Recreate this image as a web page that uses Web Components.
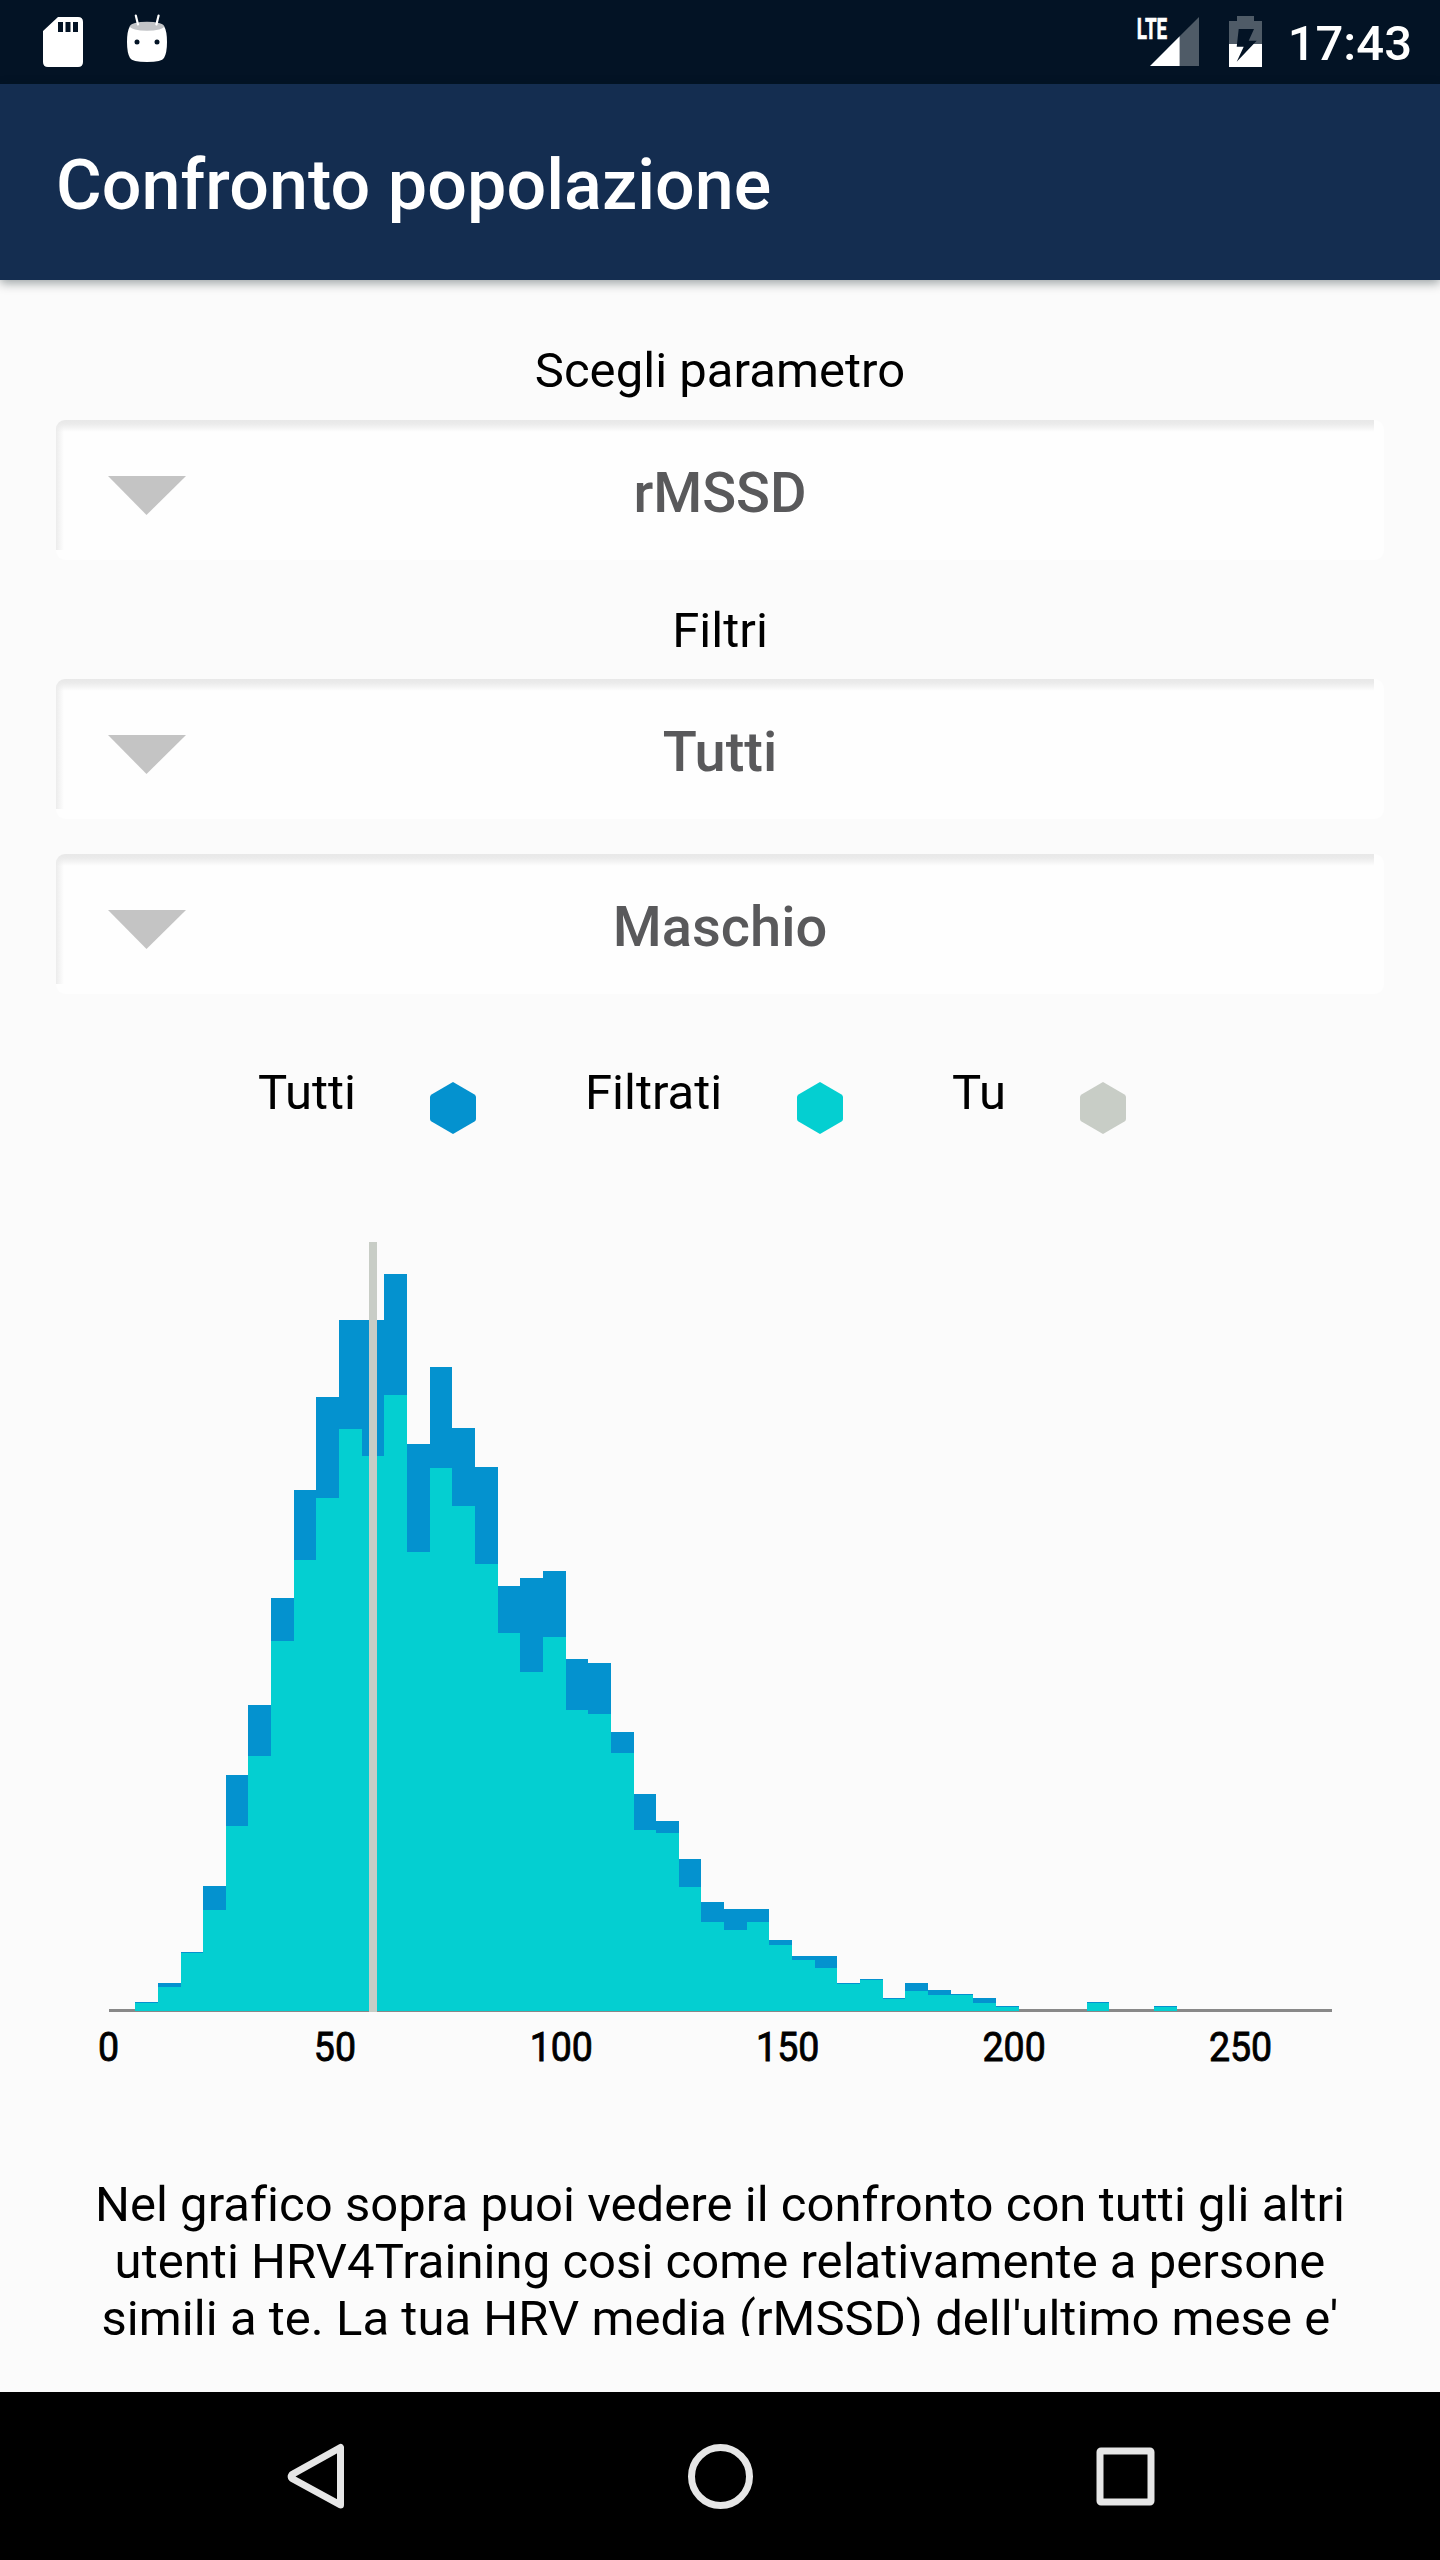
<!DOCTYPE html>
<html lang="it">
<head>
<meta charset="utf-8">
<title>Confronto popolazione</title>
<style>
  body {
    background: #fbfbfb;
    color: #000;
    font-family: Roboto, sans-serif;
    margin: 0;
  }
</style>
</head>
<body>
<population-page></population-page>

<script>
class BaseElement extends HTMLElement {
  constructor() {
    super();
    const template = document.createElement('template');
    template.innerHTML = this.constructor.template;
    this.root = this.attachShadow({ mode: 'open' });
    this.root.appendChild(template.content.cloneNode(true));
  }
}

class StatusBar extends BaseElement {
  static get template() {
    return `
      <style>
        :host {
          align-items: flex-start;
          background: #031325;
          box-sizing: border-box;
          color: #fff;
          display: flex;
          height: 84px;
          padding-right: 28px;
        }

        svg {
          display: block;
          flex: none;
        }

        .spacer {
          flex: 1;
        }

        .time {
          flex: none;
          font-size: 49px;
          font-weight: 500;
          line-height: 57px;
          padding-top: 15px;
          text-align: right;
          width: 132px;
        }
      </style>
      <svg width="200" height="84">
        <path fill="#fff" fill-rule="evenodd" d="M58 17H78Q83 17 83 22V62Q83 67 78 67H48Q43 67 43 62V31ZM58 22V32H63V22ZM65.5 22V32H70.5V22ZM73 22V32H78V22Z"/>
        <path fill="#fff" d="M130 26H164Q167 31 167 42Q167 53 164 58Q162 62 147 62Q132 62 130 58Q127 53 127 42Q127 31 130 26Z"/>
        <ellipse cx="147" cy="26.3" rx="17" ry="4.5" fill="#c2c4c7"/>
        <path d="M135.8 15.5L138 24.5M158.6 15.5L156.4 24.5" stroke="#fff" stroke-width="2.2" stroke-linecap="round"/>
        <circle cx="137" cy="42" r="2.5" fill="#031325"/>
        <circle cx="157" cy="42" r="2.5" fill="#031325"/>
      </svg>
      <div class="spacer"></div>
      <svg width="150" height="84" viewBox="1130 0 150 84">
        <text transform="translate(1136.8 39) scale(0.64 1)" fill="#fff" stroke="#fff" stroke-width="0.6" font-size="29.5" font-weight="700">LTE</text>
        <path fill="#4f5b67" d="M1179.7 36.3L1199 17V66H1179.7Z"/>
        <path fill="#fff" d="M1150 66L1179.7 36.3V66Z"/>
        <path fill="#4f5b67" d="M1237 16H1254V21H1262V44H1229V21H1237Z"/>
        <path fill="#fff" d="M1229 44H1262V67H1229Z"/>
        <path fill="#031325" d="M1238.7 29H1254L1248.7 40.7H1256.7L1236.7 61.7L1243.7 46.7H1236.7Z"/>
      </svg>
      <div class="time">17:43</div>
    `;
  }
}
window.customElements.define('status-bar', StatusBar);

class AppBar extends BaseElement {
  static get template() {
    return `
      <style>
        :host {
          align-items: center;
          background: #142d50;
          box-shadow: 0 3px 10px rgba(0, 20, 25, 0.4);
          box-sizing: border-box;
          color: #fff;
          display: flex;
          font-size: 70px;
          font-weight: 500;
          height: 196px;
          letter-spacing: 0.06px;
          line-height: 82px;
          padding: 6px 56px 0;
        }
      </style>
      <slot></slot>
    `;
  }
}
window.customElements.define('app-bar', AppBar);

class SelectBox extends BaseElement {
  static get template() {
    return `
      <style>
        :host {
          background:
            linear-gradient(#e8e8e8, #ebebeb 4px, rgba(254, 254, 254, 0) 12px) 0 0 / 1318px 12px no-repeat,
            linear-gradient(90deg, #ececec, #f3f3f3 3px, rgba(254, 254, 254, 0) 8px) 0 0 / 8px 130px no-repeat,
            #fefefe;
          border-radius: 9px;
          box-sizing: border-box;
          color: #59595b;
          display: grid;
          font-size: 56px;
          font-weight: 500;
          grid-template-columns: 78px 1fr 78px;
          height: 140px;
          line-height: 66px;
          padding: 40px 52px 0;
          text-align: center;
        }

        svg {
          display: block;
          margin-top: 16px;
        }
      </style>
      <svg width="78" height="40"><path fill="#c4c4c4" d="M0 0H78L38.5 39Z"/></svg>
      <div><slot></slot></div>
    `;
  }
}
window.customElements.define('select-box', SelectBox);

class ChartLegend extends BaseElement {
  static get template() {
    return `
      <style>
        :host {
          display: grid;
          font-size: 49px;
          grid-template-columns: 172px 155px 212px 155px 128px 46px;
          line-height: 57px;
          padding-left: 202px;
        }

        svg {
          display: block;
          margin-top: 18px;
        }
      </style>
      <div>Tutti</div>
      <svg width="46" height="52"><path fill="#0492cf" d="M23 0L44.5 12.5Q46 13.5 46 15V37Q46 38.5 44.5 39.5L23 52L1.5 39.5Q0 38.5 0 37V15Q0 13.5 1.5 12.5Z"/></svg>
      <div>Filtrati</div>
      <svg width="46" height="52"><path fill="#04cfd1" d="M23 0L44.5 12.5Q46 13.5 46 15V37Q46 38.5 44.5 39.5L23 52L1.5 39.5Q0 38.5 0 37V15Q0 13.5 1.5 12.5Z"/></svg>
      <div>Tu</div>
      <svg width="46" height="52"><path fill="#c8cdc6" d="M23 0L44.5 12.5Q46 13.5 46 15V37Q46 38.5 44.5 39.5L23 52L1.5 39.5Q0 38.5 0 37V15Q0 13.5 1.5 12.5Z"/></svg>
    `;
  }
}
window.customElements.define('chart-legend', ChartLegend);

// Top of each bar as [index, all, filtered], in page units.
const BARS = [
  [0, 2002, 2003], [1, 1983, 1987], [2, 1952, 1953], [3, 1886, 1910],
  [4, 1775, 1826], [5, 1705, 1756], [6, 1598, 1641], [7, 1490, 1560],
  [8, 1397, 1498], [9, 1320, 1429], [10, 1320, 1456], [11, 1274, 1395],
  [12, 1444, 1552], [13, 1367, 1468], [14, 1428, 1506], [15, 1467, 1564],
  [16, 1586, 1633], [17, 1578, 1672], [18, 1571, 1637], [19, 1659, 1710],
  [20, 1663, 1714], [21, 1732, 1753], [22, 1794, 1830], [23, 1821, 1833],
  [24, 1859, 1887], [25, 1902, 1922], [26, 1909, 1930], [27, 1909, 1922],
  [28, 1940, 1945], [29, 1956, 1960], [30, 1956, 1968], [31, 1983, 1984],
  [32, 1979, 1980], [33, 1998, 1999], [34, 1983, 1991], [35, 1990, 1995],
  [36, 1994, 1995], [37, 1998, 2003], [38, 2006, 2007], [42, 2002, 2003],
  [45, 2006, 2007]
];

class HistogramChart extends BaseElement {
  static get template() {
    const left = (i) => Math.floor(135.7 + 22.65 * i);
    const bar = (i, top, fill) =>
      `<rect x="${left(i)}" y="${top}" width="${left(i + 1) - left(i)}" height="${2011 - top}" fill="${fill}"/>`;
    const label = (value, i) =>
      `<text transform="translate(${108.5 + 226.4 * i} 2060.5) scale(0.915 1)">${value}</text>`;

    return `
      <style>
        :host {
          display: block;
        }

        svg {
          display: block;
        }

        text {
          font-size: 41px;
          stroke: #000;
          stroke-width: 0.9px;
          text-anchor: middle;
        }
      </style>
      <svg width="1328" height="860" viewBox="56 1220 1328 860">
        <g shape-rendering="crispEdges">
          <rect x="109" y="2009" width="1223" height="3" fill="#888"/>
          ${BARS.map(([i, all]) => bar(i, all, '#0492cf')).join('')}
          ${BARS.map(([i, all, filtered]) => bar(i, filtered, '#04cfd1')).join('')}
          <rect x="369" y="1242" width="8" height="770" fill="#c8cdc6"/>
        </g>
        ${[0, 50, 100, 150, 200, 250].map(label).join('')}
      </svg>
    `;
  }
}
window.customElements.define('histogram-chart', HistogramChart);

class NavBar extends BaseElement {
  static get template() {
    return `
      <style>
        :host {
          align-items: center;
          background: #000;
          display: flex;
          height: 168px;
          justify-content: center;
        }

        svg {
          fill: none;
          flex: none;
          height: 80px;
          stroke: #e6e6e6;
          stroke-width: 7px;
          width: 405px;
        }
      </style>
      <svg viewBox="-202.5 -40 405 80"><path stroke-linejoin="round" d="M25 -28.5V29L-23.5 2.5Q-25 .5 -23.5 -1.5Z"/></svg>
      <svg viewBox="-202.5 -40 405 80"><circle cx="0" cy=".5" r="29"/></svg>
      <svg viewBox="-202.5 -40 405 80"><rect x="-25.5" y="-25" width="51" height="51" rx="1"/></svg>
    `;
  }
}
window.customElements.define('nav-bar', NavBar);

class PopulationPage extends BaseElement {
  static get template() {
    return `
      <style>
        :host {
          display: flex;
          flex-direction: column;
          height: 2560px;
          overflow: hidden;
          width: 1440px;
        }

        main {
          box-sizing: border-box;
          flex: none;
          height: 2056px;
          overflow: hidden;
          padding: 62px 56px 0;
        }

        app-bar {
          flex: none;
          z-index: 1;
        }

        .label,
        .note {
          font-size: 49px;
          letter-spacing: 0.04px;
          line-height: 57px;
          text-align: center;
        }

        .label {
          margin-bottom: 21px;
        }

        .filters {
          display: grid;
          gap: 35px;
          margin-top: -1px;
        }

        select-box + .label {
          margin-top: 42px;
        }

        chart-legend {
          margin-top: 70px;
        }

        histogram-chart {
          margin-top: 86px;
        }

        .note {
          margin-top: 96px;
          white-space: nowrap;
        }

        nav-bar {
          margin-top: auto;
        }
      </style>
      <status-bar></status-bar>
      <app-bar>Confronto popolazione</app-bar>
      <main>
        <div class="label">Scegli parametro</div>
        <select-box>rMSSD</select-box>
        <div class="label">Filtri</div>
        <div class="filters">
          <select-box>Tutti</select-box>
          <select-box>Maschio</select-box>
        </div>
        <chart-legend></chart-legend>
        <histogram-chart></histogram-chart>
        <div class="note">
          Nel grafico sopra puoi vedere il confronto con tutti gli altri<br>
          utenti HRV4Training cosi come relativamente a persone<br>
          simili a te. La tua HRV media (rMSSD) dell'ultimo mese e'
        </div>
      </main>
      <nav-bar></nav-bar>
    `;
  }
}
window.customElements.define('population-page', PopulationPage);
</script>
</body>
</html>
